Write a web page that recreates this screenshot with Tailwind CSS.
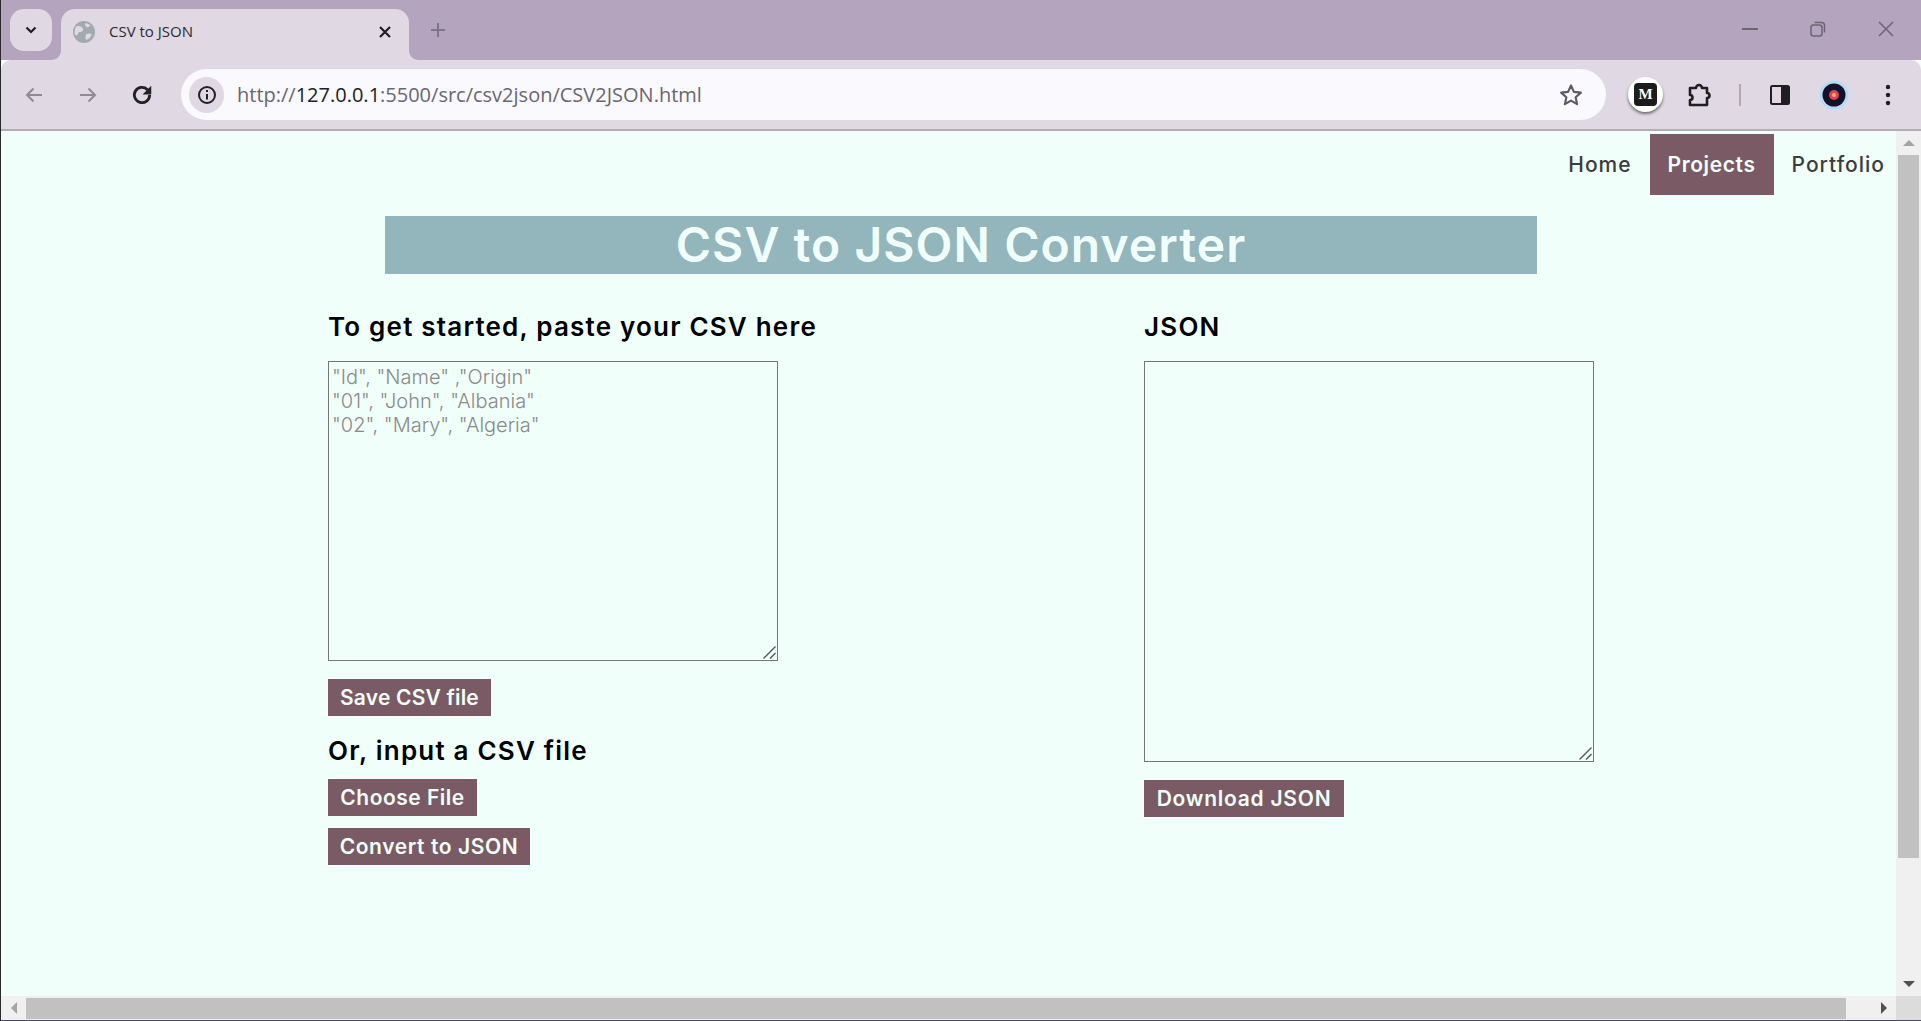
<!DOCTYPE html>
<html lang="en">
<head>
    <meta charset="UTF-8">
    <title>CSV to JSON</title>
    <script src="https://cdn.jsdelivr.net/npm/@tailwindcss/browser@4"></script>
</head>
<body class="h-screen w-screen overflow-hidden flex flex-col bg-[#f0fff9] border-l border-l-[#2a2a2a] font-['Inter',sans-serif]">
    <!-- Tab strip -->
    <div class="h-[60px] shrink-0 bg-[#b5a4bd] flex items-start pl-[9px] font-['Open_Sans',sans-serif]">
        <div class="mt-[9px] w-[42px] h-[42px] rounded-[14px] bg-[#e0d9e4] flex items-center justify-center">
            <svg width="14" height="14" viewBox="0 0 14 14" fill="none" stroke="#1f1f1f" stroke-width="2.2"><path d="M2.5 4.5 7 9l4.5-4.5"/></svg>
        </div>
        <div class="relative ml-[9px] mt-[9px] w-[348px] h-[51px] rounded-t-[14px] bg-[#e0d9e4] flex items-center pl-[12px] pr-[17px] pb-[6px]">
            <svg width="10" height="10" viewBox="0 0 10 10" class="absolute left-[-10px] bottom-0"><path d="M10 0v10H0c6 0 10-4 10-10z" fill="#e0d9e4"/></svg>
            <svg width="10" height="10" viewBox="0 0 10 10" class="absolute right-[-10px] bottom-0"><path d="M0 0v10h10C4 10 0 6 0 0z" fill="#e0d9e4"/></svg>
            <svg width="22" height="22" viewBox="0 0 20 20" class="mr-[14px] shrink-0"><circle cx="10" cy="10" r="10" fill="#a0aab0"/><path d="M3 5c3-1 5 0 6 2s-1 3-3 3-1 3-3 3-2-5 0-8zM12 12c2-1 4-1 5 0-1 3-3 5-5 5-1-1-1-3 0-5zM11 2c2 0 4 1 5 2l-3 2-2-2z" fill="#e0d9e4"/></svg>
            <span class="text-[15px] text-[#2a2a2e] flex-1">CSV to JSON</span>
            <svg width="14" height="14" viewBox="0 0 14 14" fill="none" stroke="#1f1f1f" stroke-width="2.2"><path d="M2 2l10 10M12 2 2 12"/></svg>
        </div>
        <svg width="18" height="18" viewBox="0 0 18 18" fill="none" stroke="#7f7488" stroke-width="2" class="ml-[20px] mt-[21px]"><path d="M9 2v14M2 9h14"/></svg>
        <div class="flex-1"></div>
        <div class="flex items-center h-[60px] pb-[2px]">
            <svg width="16" height="2" class="mr-[52px]"><rect width="16" height="2" fill="#6e6472"/></svg>
            <svg width="16" height="16" viewBox="0 0 16 16" fill="none" stroke="#6e6472" stroke-width="1.5" class="mr-[52px]"><rect x="1" y="4" width="11" height="11" rx="2.5"/><path d="M4.5 1.5h7a3 3 0 0 1 3 3v7"/></svg>
            <svg width="16" height="16" viewBox="0 0 16 16" fill="none" stroke="#6e6472" stroke-width="1.5" class="mr-[27px]"><path d="M1 1l14 14M15 1 1 15"/></svg>
        </div>
    </div>

    <!-- Toolbar -->
    <div class="h-[69px] shrink-0 bg-[#e0d9e4] rounded-t-[10px] flex items-center font-['Open_Sans',sans-serif]">
        <svg width="22" height="22" viewBox="0 0 22 22" fill="none" stroke="#8f8a94" stroke-width="2" class="ml-[22px] shrink-0"><path d="M19 11H4M10.5 4.5 4 11l6.5 6.5"/></svg>
        <svg width="22" height="22" viewBox="0 0 22 22" fill="none" stroke="#8f8a94" stroke-width="2" class="ml-[32px] shrink-0"><path d="M3 11h15M11.5 4.5 18 11l-6.5 6.5"/></svg>
        <svg width="24" height="24" viewBox="0 0 22 22" fill="none" stroke="#222" stroke-width="2.6" class="ml-[31px] shrink-0"><path d="M18 11a7 7 0 1 1-2.2-5.1L18 8"/><path d="M19.5 2.5v8h-8z" fill="#222" stroke="none"/></svg>
        <div class="ml-[27px] w-[1425px] h-[51px] rounded-full bg-[#faf9fd] flex items-center pl-[8px] pr-[22px] shrink-0">
            <div class="w-[35px] h-[36px] rounded-full bg-[#e0d9e4] flex items-center justify-center shrink-0">
                <svg width="20" height="20" viewBox="0 0 20 20" fill="none" stroke="#222" stroke-width="2"><circle cx="10" cy="10" r="8"/><path d="M10 9v5.5M10 5v2"/></svg>
            </div>
            <span class="ml-[13px] text-[20px] text-[#6a6670] flex-1 whitespace-nowrap">http://<span class="text-[#202124]">127.0.0.1</span>:5500/src/csv2json/CSV2JSON.html</span>
            <svg width="26" height="26" viewBox="0 0 24 24" fill="none" stroke="#5f5a63" stroke-width="2" stroke-linejoin="round"><path d="M12 3.2l2.7 5.9 6.4.7-4.8 4.3 1.3 6.3L12 17.2l-5.6 3.2 1.3-6.3-4.8-4.3 6.4-.7z"/></svg>
        </div>
        <div class="ml-[22px] w-[35px] h-[35px] rounded-full bg-white shadow-[0_2px_3px_rgba(0,0,0,0.5)] flex items-center justify-center shrink-0">
            <div class="w-[23px] h-[23px] rounded-[4px] bg-[#1c1c1c] text-white text-[15px] font-bold font-['Liberation_Serif',serif] flex items-center justify-center">M</div>
        </div>
        <svg width="26" height="26" viewBox="0 0 26 26" fill="none" stroke="#1f1f1f" stroke-width="2.6" stroke-linejoin="round" class="ml-[23px] shrink-0"><path d="M4 6h6a3 3 0 0 1 6 0h5v5a2.5 2.5 0 0 1 0 5v7H4v-5a2.5 2.5 0 0 0 0-5z"/></svg>
        <div class="ml-[27px] w-[2px] h-[22px] bg-[#b5a4bd] shrink-0"></div>
        <svg width="22" height="22" viewBox="0 0 22 22" class="ml-[28px] shrink-0"><rect x="1" y="1" width="20" height="20" rx="2.5" fill="#1f1f1f"/><rect x="3" y="3" width="9" height="16" fill="#e0d9e4"/></svg>
        <svg width="30" height="30" viewBox="0 0 30 30" class="ml-[28px] shrink-0"><circle cx="15" cy="15" r="14.5" fill="#b5dcf5"/><circle cx="15" cy="15" r="11.5" fill="#14122a"/><circle cx="15" cy="15" r="5" fill="#e0405a"/><circle cx="15" cy="15" r="2" fill="#f5c04a"/></svg>
        <svg width="6" height="22" viewBox="0 0 6 22" fill="#1f1f1f" class="ml-[36px] shrink-0"><circle cx="3" cy="3" r="2.2"/><circle cx="3" cy="11" r="2.2"/><circle cx="3" cy="19" r="2.2"/></svg>
    </div>
    <div class="h-[2px] shrink-0 bg-[#b3aeb6]"></div>

    <!-- Viewport -->
    <div class="flex-1 min-h-0 flex flex-col">
        <div class="flex-1 min-h-0 flex">
            <main class="flex-1 min-w-0 bg-[#f0fff9] flex flex-col">
                <nav class="flex justify-end pt-[3px] text-[21px] font-medium tracking-[1px] text-[#3c3c3c]">
                    <a class="h-[61px] px-[18px] flex items-center">Home</a>
                    <a class="h-[61px] px-[18px] flex items-center bg-[#7a5a65] text-[#f0fff9] font-semibold tracking-[0.6px]">Projects</a>
                    <a class="h-[61px] pl-[18px] pr-[11px] flex items-center">Portfolio</a>
                </nav>
                <div class="pl-[384px]">
                    <h1 class="mt-[21px] w-[1152px] h-[58px] bg-[#93b5bc] text-[#f0fff9] text-[48px] font-semibold flex items-center justify-center tracking-[1.05px]">CSV to JSON Converter</h1>
                </div>
                <div class="flex pl-[327px] pt-[35px]">
                    <section class="w-[816px]">
                        <h3 class="text-[26px] font-semibold text-black leading-[36px] tracking-[1.2px]">To get started, paste your CSV here</h3>
                        <div class="relative mt-[16px] w-[450px] h-[300px]">
                            <textarea class="block w-full h-full resize-none border border-[#767676] p-[3px] text-[20px] leading-[24px] font-light placeholder:text-[#8a8a8a] placeholder:opacity-100" placeholder='"Id", "Name" ,"Origin"
"01", "John", "Albania"
"02", "Mary", "Algeria"'></textarea>
                            <svg width="13" height="13" viewBox="0 0 13 13" fill="none" stroke="#555" stroke-width="1.4" class="absolute right-[2px] bottom-[2px] pointer-events-none"><path d="M0.5 12.5 12.5 0.5M7 12.5l5.5-5.5"/></svg>
                        </div>
                        <button class="mt-[18px] h-[37px] w-[163px] bg-[#7a5a65] text-[#f0fff9] text-[21px] font-semibold tracking-[0.2px] flex items-center justify-center">Save CSV file</button>
                        <h3 class="mt-[17px] text-[26px] font-semibold text-black leading-[36px] tracking-[1.2px]">Or, input a CSV file</h3>
                        <button class="mt-[10px] h-[37px] w-[149px] bg-[#7a5a65] text-[#f0fff9] text-[21px] font-semibold tracking-[0.5px] flex items-center justify-center">Choose File</button>
                        <button class="mt-[12px] h-[37px] w-[202px] bg-[#7a5a65] text-[#f0fff9] text-[21px] font-semibold tracking-[0.6px] flex items-center justify-center">Convert to JSON</button>
                    </section>
                    <section>
                        <h3 class="text-[26px] font-semibold text-black leading-[36px] tracking-[1.2px]">JSON</h3>
                        <div class="relative mt-[16px] w-[450px] h-[401px]">
                            <textarea class="block w-full h-full resize-none border border-[#767676]"></textarea>
                            <svg width="13" height="13" viewBox="0 0 13 13" fill="none" stroke="#555" stroke-width="1.4" class="absolute right-[2px] bottom-[2px] pointer-events-none"><path d="M0.5 12.5 12.5 0.5M7 12.5l5.5-5.5"/></svg>
                        </div>
                        <button class="mt-[18px] h-[37px] w-[200px] bg-[#7a5a65] text-[#f0fff9] text-[21px] font-semibold tracking-[0.75px] flex items-center justify-center">Download JSON</button>
                    </section>
                </div>
            </main>
            <!-- Vertical scrollbar -->
            <div class="w-[25px] shrink-0 bg-[#f0f0f0] flex flex-col items-center">
                <div class="h-[24px] flex items-center justify-center shrink-0"><div class="w-0 h-0 border-x-[6px] border-x-transparent border-b-[6px] border-b-[#a3a3a3]"></div></div>
                <div class="w-[21px] h-[703px] bg-[#c1c1c1]"></div>
                <div class="flex-1"></div>
                <div class="h-[24px] flex items-center justify-center shrink-0"><div class="w-0 h-0 border-x-[6px] border-x-transparent border-t-[6px] border-t-[#505050]"></div></div>
            </div>
        </div>
        <!-- Horizontal scrollbar -->
        <div class="h-[24px] shrink-0 bg-[#f0f0f0] flex items-center">
            <div class="w-[25px] flex items-center justify-center shrink-0"><div class="w-0 h-0 border-y-[6px] border-y-transparent border-r-[6px] border-r-[#a3a3a3]"></div></div>
            <div class="w-[1820px] h-[21px] bg-[#c1c1c1] shrink-0"></div>
            <div class="flex-1"></div>
            <div class="w-[25px] flex items-center justify-center shrink-0"><div class="w-0 h-0 border-y-[6px] border-y-transparent border-l-[6px] border-l-[#505050]"></div></div>
            <div class="w-[25px] h-full bg-[#dcdcdc] shrink-0"></div>
        </div>
        <div class="h-px shrink-0 bg-[#4a4560]"></div>
    </div>
</body>
</html>
